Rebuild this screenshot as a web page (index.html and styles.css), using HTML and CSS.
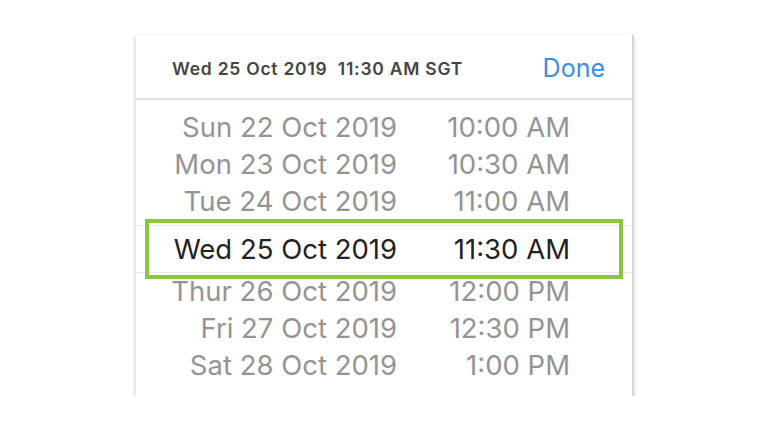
FILE: index.html
```html
<!DOCTYPE html>
<html lang="en">
<head>
    <meta charset="UTF-8">
    <meta name="viewport" content="width=device-width, initial-scale=1.0">
    <title>Date Picker</title>
    <link rel="stylesheet" href="styles.css">
</head>
<body>
    <div class="picker">
        <div class="picker-header">
            <span class="current">Wed 25 Oct 2019&nbsp; 11:30 AM SGT</span>
            <span class="done">Done</span>
        </div>
        <div class="wheel">
            <div class="row"><span class="date">Sun 22 Oct 2019</span><span class="time">10:00 AM</span></div>
            <div class="row"><span class="date">Mon 23 Oct 2019</span><span class="time">10:30 AM</span></div>
            <div class="row"><span class="date">Tue 24 Oct 2019</span><span class="time">11:00 AM</span></div>
            <div class="row selected"><span class="date">Wed 25 Oct 2019</span><span class="time">11:30 AM</span></div>
            <div class="row"><span class="date">Thur 26 Oct 2019</span><span class="time">12:00 PM</span></div>
            <div class="row"><span class="date">Fri 27 Oct 2019</span><span class="time">12:30 PM</span></div>
            <div class="row"><span class="date">Sat 28 Oct 2019</span><span class="time">1:00 PM</span></div>
        </div>
    </div>
</body>
</html>
```

FILE: styles.css
```css
body {
    margin: 0;
    background-color: #fff;
    font-family: Inter, "Noto Sans", sans-serif;
}

.picker {
    width: 496px;
    height: 361px;
    margin: 35px 0 0 136px;
    background-color: #fff;
    border-right: 2px solid #d6d6d6;
    box-shadow: 0 3px 5px rgba(0, 0, 0, 0.15), -2px 0 4px rgba(0, 0, 0, 0.06);
}

.picker-header {
    height: 65px;
    display: flex;
    align-items: center;
    justify-content: space-between;
    padding: 3px 27px 0 36px;
    box-sizing: border-box;
    border-bottom: 2px solid #e2e2e2;
}

.current {
    font-size: 17.5px;
    font-weight: 600;
    letter-spacing: 0.75px;
    color: #454545;
}

.done {
    font-size: 25px;
    color: #3b8ee3;
}

.wheel {
    padding-top: 9px;
}

.row {
    display: grid;
    grid-template-columns: 261px 173px;
    height: 37px;
    line-height: 37px;
    font-size: 27.5px;
    color: #949494;
}

.row .date,
.row .time {
    text-align: right;
}

.row.selected {
    position: relative;
    height: 46px;
    line-height: 46px;
    margin-top: 5px;
    color: #222;
    border-top: 1px solid #e8e8e8;
    border-bottom: 1px solid #e8e8e8;
}

.row.selected::after {
    content: "";
    position: absolute;
    left: 9px;
    right: 9px;
    top: -7px;
    bottom: -7px;
    border: 4px solid #8cc63f;
}
```
